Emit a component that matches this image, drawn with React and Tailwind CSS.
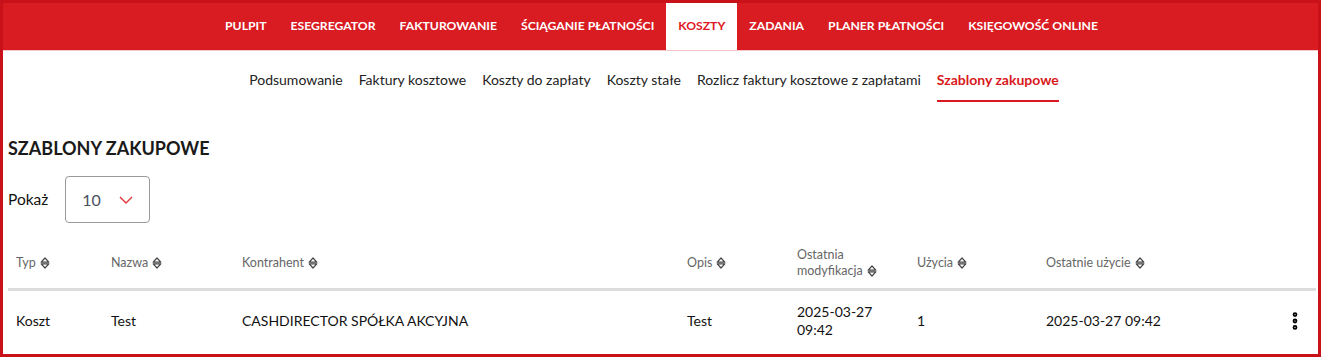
import { MoreVertical } from "lucide-react";

const navItems = [
  "PULPIT",
  "ESEGREGATOR",
  "FAKTUROWANIE",
  "ŚCIĄGANIE PŁATNOŚCI",
  "KOSZTY",
  "ZADANIA",
  "PLANER PŁATNOŚCI",
  "KSIĘGOWOŚĆ ONLINE",
];

const subItems = [
  "Podsumowanie",
  "Faktury kosztowe",
  "Koszty do zapłaty",
  "Koszty stałe",
  "Rozlicz faktury kosztowe z zapłatami",
  "Szablony zakupowe",
];

const SortIcon = () => (
  <svg width="10" height="12" viewBox="0 0 10 12" className="inline-block ml-[4px] align-[-2px]">
    <path d="M1.2 5.2 L5 1 L8.8 5.2 Z" fill="none" stroke="#444" strokeWidth="1.2" strokeLinejoin="round" />
    <path d="M1.2 6.8 L5 11 L8.8 6.8 Z" fill="none" stroke="#444" strokeWidth="1.2" strokeLinejoin="round" />
  </svg>
);

const columns = [
  { label: "Typ", w: "w-[95px]" },
  { label: "Nazwa", w: "w-[131px]" },
  { label: "Kontrahent", w: "w-[445px]" },
  { label: "Opis", w: "w-[110px]" },
  { label: ["Ostatnia", "modyfikacja"], w: "w-[120px]" },
  { label: "Użycia", w: "w-[129px]" },
  { label: "Ostatnie użycie", w: "w-[232px]" },
];

function App() {
  return (
    <div
      className="w-[1321px] h-[357px] overflow-hidden border-[3px] border-[#c9111a] bg-white text-[#1a1a1a]"
      style={{ fontFamily: "Lato, 'Noto Sans', sans-serif" }}
    >
      <nav className="h-[48px] bg-[#d91b22] flex justify-center border-b border-[#f3c6c8]">
        <ul className="flex items-stretch ml-[2px]">
          {navItems.map((item) => (
            <li
              key={item}
              className={`flex items-center px-[12px] text-[12.2px] font-bold ${
                item === "KOSZTY" ? "bg-white text-[#e0181f]" : "text-white"
              }`}
            >
              {item}
            </li>
          ))}
        </ul>
      </nav>

      <div className="flex justify-center h-[51px] pt-[18px] mr-[13px]">
        <ul className="flex gap-[16px] text-[14px]">
          {subItems.map((item) => (
            <li
              key={item}
              className={
                item === "Szablony zakupowe"
                  ? "text-[#d81920] font-bold border-b-2 border-[#d81920] h-[33px]"
                  : "text-[#222]"
              }
            >
              {item}
            </li>
          ))}
        </ul>
      </div>

      <div className="pl-[5px] pr-[2px]">
        <h1 className="mt-[34px] text-[18px] font-bold text-[#1a1a1a] leading-[24px]">
          SZABLONY ZAKUPOWE
        </h1>
        <div className="flex items-center mt-[16px] gap-[15px]">
          <span className="text-[15.5px] text-[#111]">Pokaż</span>
          <div className="w-[85px] h-[47px] rounded-[4px] border border-[#9a9a9a] flex items-center pl-[16px] gap-[18px] ml-[2px]">
            <span className="text-[16px] text-[#4a5060]">10</span>
            <svg width="14" height="8" viewBox="0 0 14 8">
              <path d="M1 1 L7 7 L13 1" fill="none" stroke="#e0333a" strokeWidth="1.4" />
            </svg>
          </div>
        </div>

        <table className="mt-[16px] w-full table-fixed border-collapse">
          <thead>
            <tr className="border-b-[3px] border-[#dcdcdc] h-[50px]">
              {columns.map((c, i) => (
                <th
                  key={i}
                  className={`${c.w} px-[8px] text-left font-normal text-[12.5px] text-[#666] leading-[16px] align-middle`}
                >
                  {Array.isArray(c.label) ? (
                    <>
                      {c.label[0]}
                      <br />
                      {c.label[1]}
                      <SortIcon />
                    </>
                  ) : (
                    <>
                      {c.label}
                      <SortIcon />
                    </>
                  )}
                </th>
              ))}
              <th />
            </tr>
          </thead>
          <tbody>
            <tr className="h-[62px] text-[14px] text-[#111] leading-[18px]">
              <td className="px-[8px]">Koszt</td>
              <td className="px-[8px]">Test</td>
              <td className="px-[8px]">CASHDIRECTOR SPÓŁKA AKCYJNA</td>
              <td className="px-[8px]">Test</td>
              <td className="px-[8px]">
                2025-03-27
                <br />
                09:42
              </td>
              <td className="px-[8px]">1</td>
              <td className="px-[8px]">2025-03-27 09:42</td>
              <td className="text-right pr-[10px]">
                <MoreVertical className="inline-block w-[22px] h-[22px] text-black" strokeWidth={3.2} />
              </td>
            </tr>
          </tbody>
        </table>
      </div>
    </div>
  );
}

export default App;
